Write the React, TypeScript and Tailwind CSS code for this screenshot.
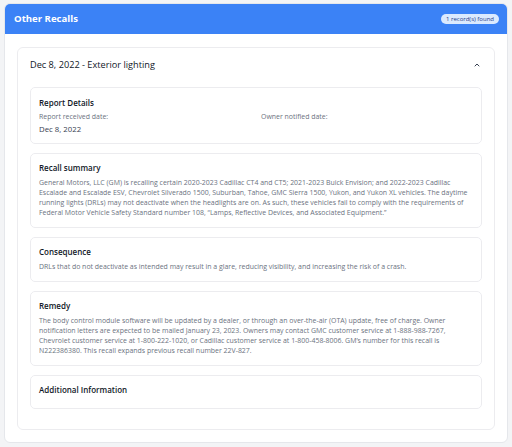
const SECTIONS = [
  {
    title: "Recall summary",
    body: "General Motors, LLC (GM) is recalling certain 2020-2023 Cadillac CT4 and CT5; 2021-2023 Buick Envision; and 2022-2023 Cadillac Escalade and Escalade ESV, Chevrolet Silverado 1500, Suburban, Tahoe, GMC Sierra 1500, Yukon, and Yukon XL vehicles. The daytime running lights (DRLs) may not deactivate when the headlights are on. As such, these vehicles fail to comply with the requirements of Federal Motor Vehicle Safety Standard number 108, \u201cLamps, Reflective Devices, and Associated Equipment.\u201d",
  },
  {
    title: "Consequence",
    body: "DRLs that do not deactivate as intended may result in a glare, reducing visibility, and increasing the risk of a crash.",
  },
  {
    title: "Remedy",
    body: "The body control module software will be updated by a dealer, or through an over-the-air (OTA) update, free of charge. Owner notification letters are expected to be mailed January 23, 2023. Owners may contact GMC customer service at 1-888-988-7267, Chevrolet customer service at 1-800-222-1020, or Cadillac customer service at 1-800-458-8006. GM\u2019s number for this recall is N222386380. This recall expands previous recall number 22V-827.",
  },
];

const SubCard = ({ title, children }: { title: string; children?: React.ReactNode }) => (
  <div className="rounded-[5px] border border-[#ececef] bg-white px-[8px] pt-[9.5px] pb-[9px]">
    <h3 className="text-[8px] leading-[10px] font-semibold text-[#111827]">{title}</h3>
    {children}
  </div>
);

export default function App() {
  return (
    <div
      className="min-h-screen bg-[#f3f4f6] px-[4px] pt-[3px] pb-[5px]"
      style={{ fontFamily: "'Open Sans', 'Noto Sans', sans-serif" }}
    >
      <div className="overflow-hidden rounded-[6px] border border-[#e5e7eb] bg-white">
        {/* header bar */}
        <div className="flex h-[30px] items-center justify-between bg-[#3b82f6] pl-[9px] pr-[8px]">
          <h2 className="text-[9.6px] font-bold text-white">Other Recalls</h2>
          <span className="rounded-full bg-[#dbeafe] px-[5px] py-[1px] text-[6px] leading-[8px] text-[#1e3a8a]">
            1 record(s) found
          </span>
        </div>

        <div className="px-[12px] pt-[13px] pb-[12px]">
          <div className="rounded-[6px] border border-[#ececef] bg-white">
            {/* accordion trigger */}
            <div className="flex h-[33px] items-center justify-between pl-[12px] pr-[13px]">
              <span className="text-[9.2px] font-medium text-[#111827]">Dec 8, 2022 - Exterior lighting</span>
              <svg width="6" height="4" viewBox="0 0 6 4" fill="none" className="mr-[1px]">
                <path d="M1 3L3 1L5 3" stroke="#374151" strokeWidth="1" strokeLinecap="round" strokeLinejoin="round" />
              </svg>
            </div>

            <div className="flex flex-col gap-[9px] px-[12px] pt-[6px] pb-[20px]">
              <div className="rounded-[5px] border border-[#ececef] bg-white px-[8px] pt-[9.5px] pb-[7.5px]">
                <h3 className="text-[8px] leading-[10px] font-semibold text-[#111827]">Report Details</h3>
                <div className="mt-[4.5px] grid grid-cols-2 gap-x-[10px]">
                  <div>
                    <div className="text-[6.95px] leading-[10px] text-[#6b7280]">Report received date:</div>
                    <div className="mt-[2px] text-[7.8px] leading-[11px] text-[#374151]">Dec 8, 2022</div>
                  </div>
                  <div className="text-[6.95px] leading-[10px] text-[#6b7280]">Owner notified date:</div>
                </div>
              </div>

              {SECTIONS.map((s) => (
                <SubCard key={s.title} title={s.title}>
                  <p className="mt-[4.5px] text-[6.95px] leading-[10px] text-[#6b7280]">{s.body}</p>
                </SubCard>
              ))}

              <div className="rounded-[5px] border border-[#ececef] bg-white px-[8px] pt-[9.5px] pb-[12.5px]">
                <h3 className="text-[8px] leading-[10px] font-semibold text-[#111827]">Additional Information</h3>
              </div>
            </div>
          </div>
        </div>
      </div>
    </div>
  );
}
